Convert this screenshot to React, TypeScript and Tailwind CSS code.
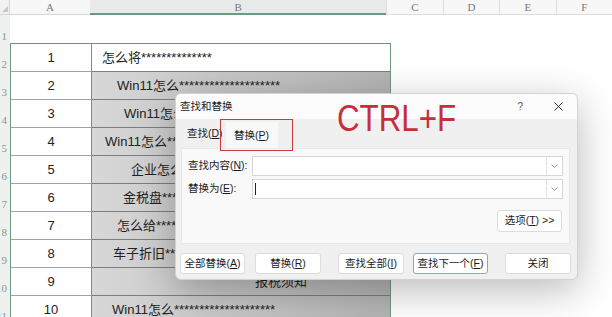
import React from "react";

const cellFont = "font-['Liberation_Sans','Noto_Sans_CJK_SC',sans-serif]";

const rows = [
  { n: 1, text: "怎么将**************", pad: "pl-[10px]", gray: false },
  { n: 2, text: "Win11怎么********************", pad: "pl-[25px]", gray: true },
  { n: 3, text: "Win11怎么****************************", pad: "pl-[32px]", gray: true },
  { n: 4, text: "Win11怎么************************", pad: "pl-[13px]", gray: true },
  { n: 5, text: "企业怎么*******************", pad: "pl-[39px]", gray: true },
  { n: 6, text: "金税盘*********************", pad: "pl-[31px]", gray: true },
  { n: 7, text: "怎么给**********************", pad: "pl-[25px]", gray: true },
  { n: 8, text: "车子折旧*********************", pad: "pl-[21px]", gray: true },
  { n: 9, text: "报税须知", pad: "pl-[163px]", gray: true },
  { n: 10, text: "Win11怎么********************", pad: "pl-[20px]", gray: true },
];

// little combobox arrow
const Chevron = () => (
  <div className="flex w-[16px] items-center justify-center border-l border-[#e2e2e2]">
    <svg width="7" height="4" viewBox="0 0 7 4">
      <path d="M0.5 0.5 L3.5 3.5 L6.5 0.5" fill="none" stroke="#8a8a8a" strokeWidth="0.9" />
    </svg>
  </div>
);

const Btn = ({ label, w, focus }: { label: React.ReactNode; w: string; focus?: boolean }) => (
  <div
    className={`flex h-[21px] ${w} items-center justify-center whitespace-nowrap rounded-[3px] border bg-white ${
      focus ? "border-[#8fa7bd]" : "border-[#dcdcdc]"
    }`}
  >
    {label}
  </div>
);

export default function App() {
  return (
    <div className="relative h-[317px] w-[612px] overflow-hidden bg-white">
      {/* column headers */}
      <div className="flex h-[15px] font-['Liberation_Serif',serif] text-[11px] leading-[14px] text-[#7a7a7a]">
        <div className="relative w-[10px] border-b border-r border-[#d6d6d6] bg-[#f2f2f2]">
          <div className="absolute bottom-[2px] right-[1px] h-0 w-0 border-b-[6px] border-l-[6px] border-b-[#c9c9c9] border-l-transparent" />
        </div>
        <div className="w-[81px] border-b border-[#d6d6d6] bg-[#f7f7f7] text-center">A</div>
        <div className="w-[299px] border-b-2 border-[#6b9a80] bg-[#e9ebea] text-center">B</div>
        {["C", "D", "E", "F"].map((c) => (
          <div key={c} className="w-[57px] border-b border-l border-[#dedede] bg-[#f7f7f7] text-center">
            {c}
          </div>
        ))}
      </div>

      <div className="flex">
        {/* row headers, mostly cut off */}
        <div className="flex w-[10px] flex-col bg-[#eef1ef] font-['Liberation_Serif',serif] text-[11px] text-[#7f9b8c]">
          {Array.from({ length: 11 }, (_, i) => (
            <div key={i} className="flex h-[28px] items-end justify-end overflow-hidden pb-[1px] leading-[12px]">
              <span className="pr-[3px]">{i + 1}</span>
            </div>
          ))}
        </div>

        <div className="flex flex-col">
          <div className="h-[28px]" />
          <div className={`w-[381px] border border-[#6f9882] text-[13px] text-[#222] ${cellFont}`}>
            {rows.map((r) => (
              <div key={r.n} className="flex h-[28px]">
                <div className="flex w-[81px] items-center justify-center border-b border-r border-b-[#94ab9e] border-r-[#6f9882] bg-white">
                  {r.n}
                </div>
                <div
                  className={`flex w-[298px] items-center whitespace-nowrap border-b border-[#7d7d7d] ${r.pad} ${
                    r.gray ? "bg-linear-to-r from-[#d7d7d7] to-[#b4b4b4]" : "bg-white"
                  }`}
                >
                  {r.text}
                </div>
              </div>
            ))}
          </div>
        </div>
      </div>

      {/* find & replace dialog */}
      <div className="absolute left-[175px] top-[93px] flex h-[187px] w-[403px] flex-col overflow-hidden rounded-[6px] border border-[#d2d2d2] bg-[#f0f0f0] font-['Liberation_Sans','Noto_Sans_CJK_SC',sans-serif] text-[10.5px] text-[#1b1b1b] shadow-[0_10px_40px_rgba(0,0,0,0.28)]">
        <div className="flex h-[25px] items-center bg-[#fcfcfc] pl-[4px] pr-[14px]">
          <span>查找和替换</span>
          <span className="ml-auto mr-[31px] text-[10px] text-[#555]">?</span>
          <svg width="9" height="9" viewBox="0 0 9 9">
            <path d="M0.5 0.5 L8.5 8.5 M8.5 0.5 L0.5 8.5" stroke="#333" strokeWidth="1" />
          </svg>
        </div>

        <div className="flex h-[29px] items-end pl-[11px]">
          <div className="whitespace-nowrap pb-[6px]">
            查找(<u>D</u>)
          </div>
          <div className="ml-[3px] flex h-[26px] w-[52px] items-center justify-center whitespace-nowrap bg-[#f9f9f9] pt-[2px]">
            替换(<u>P</u>)
          </div>
        </div>

        <div className="ml-[5px] mr-[7px] flex h-[96px] flex-col border border-[#e8e8e8] bg-[#f9f9f9] px-[6px] pt-[7px]">
          <div className="flex h-[20px] items-center">
            <span className="w-[64px] shrink-0 whitespace-nowrap">
              查找内容(<u>N</u>):
            </span>
            <div className="flex h-[20px] flex-1 border border-[#d6d6d6] bg-white">
              <div className="flex-1" />
              <Chevron />
            </div>
          </div>
          <div className="mt-[3px] flex h-[20px] items-center">
            <span className="w-[64px] shrink-0 whitespace-nowrap">
              替换为(<u>E</u>):
            </span>
            <div className="flex h-[20px] flex-1 border border-[#d6d6d6] bg-white">
              <div className="flex flex-1 items-center pl-[2px]">
                <div className="h-[12px] w-px bg-[#222]" />
              </div>
              <Chevron />
            </div>
          </div>
          <div className="mt-[11px] flex justify-end pr-[1px]">
            <div className="flex h-[22px] w-[65px] items-center justify-center whitespace-nowrap rounded-[3px] border border-[#dcdcdc] bg-white">
              选项(<u>T</u>) &gt;&gt;
            </div>
          </div>
        </div>

        <div className="mt-[9px] flex pl-[4px]">
          <Btn w="w-[65px]" label={<>全部替换(<u>A</u>)</>} />
          <div className="ml-[10px]">
            <Btn w="w-[66px]" label={<>替换(<u>R</u>)</>} />
          </div>
          <div className="ml-[17px]">
            <Btn w="w-[66px]" label={<>查找全部(<u>I</u>)</>} />
          </div>
          <div className="ml-[9px]">
            <Btn w="w-[75px]" focus label={<>查找下一个(<u>F</u>)</>} />
          </div>
          <div className="ml-[17px]">
            <Btn w="w-[66px]" label="关闭" />
          </div>
        </div>
      </div>

      {/* annotation */}
      <div className="absolute left-[220px] top-[119px] h-[32px] w-[73px] border-[1.5px] border-[#c93a3a]" />
      <div className="absolute left-[337px] top-[101px] origin-left scale-x-[0.87] whitespace-nowrap font-['Liberation_Sans',sans-serif] text-[36px] leading-none text-[#c62f3a]">
        CTRL+F
      </div>
    </div>
  );
}
